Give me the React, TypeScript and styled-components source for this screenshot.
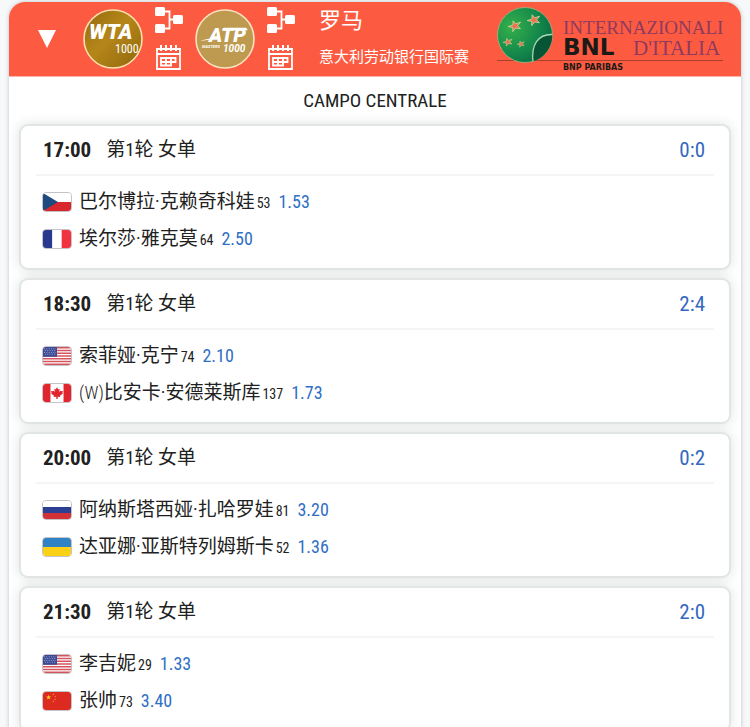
import React, { FC, ReactNode } from 'react';
import styled, { createGlobalStyle } from 'styled-components';

const sans = `'Roboto Condensed', 'Liberation Sans Narrow', Roboto, 'Noto Sans CJK SC', sans-serif`;

const GlobalStyle = createGlobalStyle`
  * {
    box-sizing: border-box;
  }
  body {
    margin: 0;
    background: #f7f8f9;
    color: #212121;
    font-family: ${sans};
  }
`;

const Page = styled.main`
  padding: 2px 9px 0;
`;

const Panel = styled.section`
  background: #fff;
  border-radius: 16px 16px 0 0;
  box-shadow: 0 0 4px rgba(20, 40, 50, 0.25);
  overflow: hidden;
`;

const Header = styled.header`
  display: flex;
  align-items: center;
  height: 75px;
  padding: 0 16px 0 24px;
  background: #fc5b41;
  border-bottom: 1px solid #fdb5a8;
  color: #fff;
`;

const Toggle = styled.button`
  display: flex;
  padding: 4px;
  margin-right: 22px;
  border: 0;
  background: none;
  cursor: pointer;
`;

const Tour = styled.div`
  display: flex;
  align-items: center;
  gap: 12px;
  margin-right: 12px;
`;

const TourLinks = styled.div`
  display: flex;
  flex-direction: column;
  gap: 12px;
`;

const IconLink = styled.a`
  display: flex;
  color: #fff;
`;

const Titles = styled.div`
  flex: 1;
  display: flex;
  flex-direction: column;
  gap: 8px;
  padding-bottom: 4px;
  margin-left: 12px;
  white-space: nowrap;
`;

const City = styled.h1`
  margin: 0;
  font-size: 22px;
  line-height: 32px;
  font-weight: 400;
`;

const EventName = styled.p`
  margin: 0;
  font-size: 15px;
  line-height: 24px;
`;

const Court = styled.h2`
  margin: 0;
  font-size: 19px;
  line-height: 47px;
  font-weight: 400;
  text-align: center;
`;

const Matches = styled.div`
  display: flex;
  flex-direction: column;
  gap: 8px;
  padding: 0 10px;
`;

const Card = styled.article`
  padding: 0 15px 11px;
  background: #fff;
  border: 2px solid #e1e5e6;
  border-radius: 9px;
  box-shadow: 0 0 12px rgba(20, 40, 40, 0.14);
`;

const CardHead = styled.div`
  display: flex;
  align-items: center;
  gap: 15px;
  height: 50px;
  padding: 0 9px 0 7px;
  border-bottom: 2px solid #f4f5f5;
  line-height: 24px;
`;

const Time = styled.time`
  font-size: 21px;
  font-weight: 700;
`;

const Round = styled.span`
  font-size: 19px;
`;

const Score = styled.a`
  margin-left: auto;
  color: #3467c0;
  font-size: 21px;
  text-decoration: none;
`;

const Players = styled.ul`
  display: flex;
  flex-direction: column;
  margin: 0;
  padding: 7px 6px 0;
  list-style: none;
`;

const PlayerRow = styled.li`
  display: flex;
  align-items: center;
  height: 37px;
`;

const Flag = styled.svg`
  flex: none;
  width: 30px;
  height: 20px;
  margin-right: 7px;
  border: 1px solid #c4c4c8;
  border-radius: 4px;
`;

const Entry = styled.span`
  font-size: 18px;
  font-weight: 300;
`;

const Name = styled.span`
  font-size: 19px;
  line-height: 28px;
`;

const Rank = styled.span`
  margin: 2px 8px 0 2px;
  font-size: 14px;
`;

const Odds = styled.a`
  color: #2f6fc4;
  font-size: 18px;
  text-decoration: none;
`;

type Country = 'cz' | 'fr' | 'us' | 'ca' | 'ru' | 'ua' | 'cn';

const STAR = 'M0-1 .22-.31H.95L.36.12.59.81 0 .38-.59.81-.36.12-.95-.31H-.22Z';

const flags: Record<Country, ReactNode> = {
  cz: (
    <>
      <path fill="#fff" d="M0 0h30v10H0z" />
      <path fill="#d9272e" d="M0 10h30v10H0z" />
      <path fill="#1d4a80" d="M0 0l16 10L0 20z" />
    </>
  ),
  fr: (
    <>
      <path fill="#293a8e" d="M0 0h10v20H0z" />
      <path fill="#fff" d="M10 0h10v20H10z" />
      <path fill="#ef3340" d="M20 0h10v20H20z" />
    </>
  ),
  us: (
    <>
      <path fill="#fff" d="M0 0h30v20H0z" />
      <path stroke="#d3545c" strokeWidth="1.6" d="M0 .8h30M0 3.9h30M0 7h30M0 10h30M0 13.1h30M0 16.2h30M0 19.2h30" />
      <path fill="#3b4a94" d="M0 0h15v10.8H0z" />
      <path stroke="#b9c0e0" strokeWidth=".9" strokeDasharray="1 1.5" d="M1 2h13M2 4h12M1 6h13M2 8h12" />
    </>
  ),
  ca: (
    <>
      <path fill="#fff" d="M0 0h30v20H0z" />
      <path fill="#e0252c" d="M0 0h8v20H0zM22 0h8v20h-8z" />
      <path
        fill="#e0252c"
        d="M15 3.5l1.4 2.6 1.5-.8-.6 3.6 1.8-1.8.4 1 2-.3-.8 2.1.9.5-3.4 2.7.4 1.4-2.9-.4.1 2.7h-1.6l.1-2.7-2.9.4.4-1.4-3.4-2.7.9-.5-.8-2.1 2 .3.4-1 1.8 1.8-.6-3.6 1.5.8z"
      />
    </>
  ),
  ru: (
    <>
      <path fill="#fff" d="M0 0h30v7H0z" />
      <path fill="#2b3f95" d="M0 6.7h30v7H0z" />
      <path fill="#d33138" d="M0 13.3h30V20H0z" />
    </>
  ),
  ua: (
    <>
      <path fill="#2f83c5" d="M0 0h30v10H0z" />
      <path fill="#fbd116" d="M0 10h30v10H0z" />
    </>
  ),
  cn: (
    <>
      <path fill="#dd2a20" d="M0 0h30v20H0z" />
      <g fill="#f8d023">
        <path d={STAR} transform="translate(6 6) scale(3)" />
        <path d={STAR} transform="translate(11 2.6) scale(1)" />
        <path d={STAR} transform="translate(13 5) scale(1)" />
        <path d={STAR} transform="translate(13 8) scale(1)" />
        <path d={STAR} transform="translate(11 10.4) scale(1)" />
      </g>
    </>
  ),
};

const WtaLogo: FC = () => (
  <svg width="60" height="60" viewBox="0 0 60 60" role="img" aria-label="WTA 1000">
    <defs>
      <linearGradient id="wta" x1="0" y1="0" x2="1" y2="1">
        <stop offset="0" stopColor="#94690d" />
        <stop offset=".45" stopColor="#b5871a" />
        <stop offset="1" stopColor="#8f660c" />
      </linearGradient>
    </defs>
    <circle cx="30" cy="30" r="29" fill="url(#wta)" stroke="#fbdfae" strokeWidth="1.6" />
    <text x="6" y="30" fill="#fff" fontFamily="Roboto" fontWeight="900" fontStyle="italic" fontSize="21">
      WTA
    </text>
    <text x="32" y="44" fill="#fff" fontFamily={sans} fontSize="12">
      1000
    </text>
  </svg>
);

const AtpLogo: FC = () => (
  <svg width="60" height="60" viewBox="0 0 60 60" role="img" aria-label="ATP Masters 1000">
    <circle cx="30" cy="30" r="29" fill="#bd9a50" stroke="#fbe3c0" strokeWidth="1.6" />
    <text x="14" y="33" fill="#fff" fontFamily="Roboto" fontWeight="900" fontStyle="italic" fontSize="20">
      ATP
    </text>
    <path fill="#fff" d="M5 32c5-1.6 12-3 20-3.4l-1 2.2c-7-.4-13 .2-19 1.2zM29 18.800h22l2 2.400H28z" />
    <text x="7" y="39" fill="#fff" fontFamily="Roboto" fontWeight="700" fontStyle="italic" fontSize="4">
      MASTERS
    </text>
    <text x="28" y="43" fill="#fff" fontFamily="Roboto" fontWeight="700" fontStyle="italic" fontSize="10">
      1000
    </text>
  </svg>
);

const DrawIcon: FC = () => (
  <svg width="28" height="26" viewBox="0 0 28 26" fill="currentColor">
    <rect x="0" y="0" width="10" height="9" rx="1.5" />
    <rect x="0" y="17" width="10" height="9" rx="1.5" />
    <rect x="18" y="8" width="10" height="9" rx="1.5" />
    <path d="M10 4.500h4.500v17H10M14.500 12.500H18" fill="none" stroke="currentColor" strokeWidth="1.800" />
  </svg>
);

const CalendarIcon: FC = () => (
  <svg width="28" height="26" viewBox="0 0 28 26" fill="none" stroke="currentColor" strokeWidth="2">
    <path d="M2 4h23v20H2zM2 9h23" strokeWidth="1.800" />
    <path d="M6 0v6M11 0v6M16 0v6M21 0v6" />
    <path d="M6 13h14.500v4H6zM6 13v7.500h10V13M11 13v7" strokeWidth="1.800" />
  </svg>
);

const BallStar: FC<{ x: number; y: number; size: number }> = ({ x, y, size }) => (
  <path d={STAR} fill="#f0714c" stroke="#bfd9a0" strokeWidth=".12" transform={`translate(${x} ${y}) rotate(-20) scale(${size} ${size * 0.8})`} />
);

const BnlLogo: FC = () => (
  <svg width="228" height="66" viewBox="0 0 228 66" role="img" aria-label="Internazionali BNL d'Italia">
    <defs>
      <radialGradient id="ball" cx=".25" cy=".35" r=".8">
        <stop offset="0" stopColor="#35b04a" />
        <stop offset=".6" stopColor="#158a4c" />
        <stop offset="1" stopColor="#0b6a42" />
      </radialGradient>
    </defs>
    <path d="M0 54.500h226" stroke="#a8402f" />
    <circle cx="28" cy="29" r="27.500" fill="url(#ball)" stroke="#9bbd83" strokeWidth=".8" />
    <path d="M36 55.500C34 39 41 28 55.300 28.500A27.500 27.500 0 0 1 36 55.500z" fill="#075536" />
    <path d="M36 55.500C34 39 41 28 55.300 28.500" fill="none" stroke="#a9d9b0" strokeWidth="1.300" />
    <BallStar x={37} y={14} size={7} />
    <BallStar x={18} y={20} size={7} />
    <BallStar x={11} y={36} size={5} />
    <BallStar x={24} y={38} size={4} />
    <g fontFamily="'Liberation Serif'" fill="#8f3a5e">
      <text x="66" y="28" fontSize="19">
        INTERNAZIONALI
      </text>
      <text x="136" y="49" fontSize="21">
        D'ITALIA
      </text>
    </g>
    <g fontFamily="'DejaVu Sans'" fontWeight="700" fill="#1c1a17">
      <text x="66" y="49" fontSize="23">
        BNL
      </text>
      <text x="66" y="64" fontSize="8">
        BNP PARIBAS
      </text>
    </g>
  </svg>
);

interface Player {
  country: Country;
  entry?: string;
  name: string;
  rank: number;
  odds: string;
}

interface Match {
  time: string;
  score: string;
  players: Player[];
}

const matches: Match[] = [
  {
    time: '17:00',
    score: '0:0',
    players: [
      { country: 'cz', name: '巴尔博拉·克赖奇科娃', rank: 53, odds: '1.53' },
      { country: 'fr', name: '埃尔莎·雅克莫', rank: 64, odds: '2.50' },
    ],
  },
  {
    time: '18:30',
    score: '2:4',
    players: [
      { country: 'us', name: '索菲娅·克宁', rank: 74, odds: '2.10' },
      { country: 'ca', entry: '(W)', name: '比安卡·安德莱斯库', rank: 137, odds: '1.73' },
    ],
  },
  {
    time: '20:00',
    score: '0:2',
    players: [
      { country: 'ru', name: '阿纳斯塔西娅·扎哈罗娃', rank: 81, odds: '3.20' },
      { country: 'ua', name: '达亚娜·亚斯特列姆斯卡', rank: 52, odds: '1.36' },
    ],
  },
  {
    time: '21:30',
    score: '2:0',
    players: [
      { country: 'us', name: '李吉妮', rank: 29, odds: '1.33' },
      { country: 'cn', name: '张帅', rank: 73, odds: '3.40' },
    ],
  },
];

const TourBlock: FC<{ logo: ReactNode; tour: string }> = ({ logo, tour }) => (
  <Tour>
    {logo}
    <TourLinks>
      <IconLink href="#draw" aria-label={`${tour} draw`}>
        <DrawIcon />
      </IconLink>
      <IconLink href="#schedule" aria-label={`${tour} schedule`}>
        <CalendarIcon />
      </IconLink>
    </TourLinks>
  </Tour>
);

const MatchCard: FC<{ match: Match }> = ({ match }) => (
  <Card>
    <CardHead>
      <Time>{match.time}</Time>
      <Round>第1轮 女单</Round>
      <Score href="#score">{match.score}</Score>
    </CardHead>
    <Players>
      {match.players.map((p) => (
        <PlayerRow key={p.name}>
          <Flag viewBox="0 0 30 20" preserveAspectRatio="none" aria-hidden="true">
            {flags[p.country]}
          </Flag>
          {p.entry && <Entry>{p.entry}</Entry>}
          <Name>{p.name}</Name>
          <Rank>{p.rank}</Rank>
          <Odds href="#odds">{p.odds}</Odds>
        </PlayerRow>
      ))}
    </Players>
  </Card>
);

const App: FC = () => (
  <>
    <GlobalStyle />
    <Page lang="zh-CN">
      <Panel>
        <Header>
          <Toggle type="button" aria-label="Collapse">
            <svg width="20" height="20" viewBox="0 0 20 20">
              <path fill="#fff" d="M1 1h18l-9 18z" />
            </svg>
          </Toggle>
          <TourBlock logo={<WtaLogo />} tour="WTA" />
          <TourBlock logo={<AtpLogo />} tour="ATP" />
          <Titles>
            <City>罗马</City>
            <EventName>意大利劳动银行国际赛</EventName>
          </Titles>
          <BnlLogo />
        </Header>
        <Court>CAMPO CENTRALE</Court>
        <Matches>
          {matches.map((m) => (
            <MatchCard key={m.time} match={m} />
          ))}
        </Matches>
      </Panel>
    </Page>
  </>
);

export default App;
